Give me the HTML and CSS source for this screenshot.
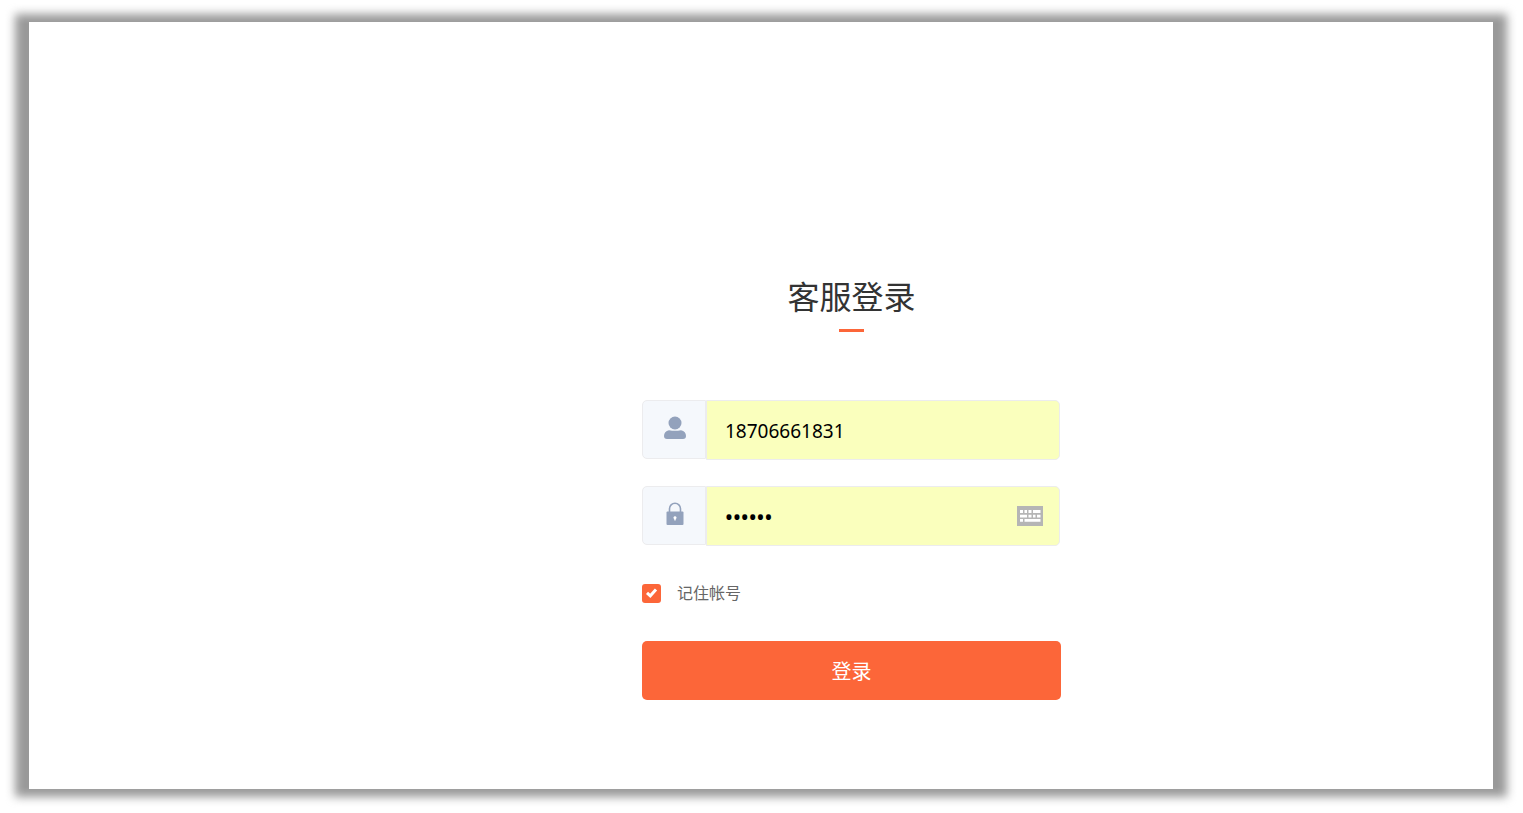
FILE: index.html
```html
<!DOCTYPE html>
<html lang="zh-CN">
<head>
<meta charset="utf-8">
<title>客服登录</title>
<link rel="stylesheet" href="styles.css">
</head>
<body>
<main class="panel">
  <form class="login">
    <h1 class="login-title">客服登录</h1>
    <div class="field">
      <label class="field-icon" for="account" aria-label="帐号">
        <svg width="22" height="24" viewBox="0 0 22 24" fill="#93a2bc"><circle cx="11" cy="7" r="6.5"/><path d="M5 14.2Q11 15.4 17 14.2Q22 15.500 22 20Q22 23 19 23H3Q0 23 0 20Q0 15.500 5 14.200Z"/></svg>
      </label>
      <input class="field-input" id="account" type="text" value="18706661831">
    </div>
    <div class="field">
      <label class="field-icon" for="password" aria-label="密码">
        <svg width="22" height="24" viewBox="0 0 22 24"><path d="M5.500 11V6.800a5.500 5.500 0 0 1 11 0V11" fill="none" stroke="#93a2bc" stroke-width="1.600"/><rect x="2.500" y="9.500" width="17" height="13.500" rx="1" fill="#93a2bc"/><path d="M11 14.200a1.500 1.500 0 0 1 .8 2.800L11.600 18.500H10.400L10.200 17a1.500 1.500 0 0 1 .8-2.800Z" fill="#fff"/></svg>
      </label>
      <input class="field-input field-input-secret" id="password" type="password" value="123456">
      <button class="keyboard" type="button" aria-label="软键盘">
        <svg width="26" height="20" viewBox="0 0 26 20"><path d="M0 0H26V20H0Z" fill="#b5b5b5"/><path d="M3 4h3v3H3zM7.500 4h2.500v3h-2.500zM11.500 4h3v3h-3zM16 4h7.500v3H16zM3 8.800h7v2.700H3zM11.500 8.800h3v2.700h-3zM16 8.800h2.500v2.700H16zM20 8.800h3.500v2.700H20zM3 13h3v2.700H3zM7.500 13h16v2.700h-16z" fill="#fff"/></svg>
      </button>
    </div>
    <label class="remember">
      <input class="remember-box" type="checkbox" checked>
      <svg class="remember-tick" width="19" height="19" viewBox="0 0 19 19" fill="none" stroke="#fff" stroke-width="3"><path d="M5 8.800L8.300 11.800L14 5.500"/></svg>
      <span>记住帐号</span>
    </label>
    <button class="submit" type="submit">登录</button>
  </form>
</main>
</body>
</html>
```
FILE: styles.css
```css
* {
  box-sizing: border-box;
}

body {
  margin: 0;
  min-height: 100vh;
  padding: 22px 30px 24px 29px;
  display: flex;
  background: #fff;
  font-family: "Noto Sans", "Noto Sans CJK SC", sans-serif;
  overflow: hidden;
}

.panel {
  position: relative;
  flex: 1;
  display: flex;
  justify-content: center;
  align-items: flex-end;
  padding: 40px 0 89px 181px;
  background: #fff;
}

/* soft frame, wider at the sides than above and below */
.panel::before {
  content: "";
  position: absolute;
  inset: -8px -14px;
  z-index: -1;
  background: #999;
  filter: blur(5px);
}

.login {
  width: 419px;
  display: flex;
  flex-direction: column;
}

.login-title {
  display: flex;
  flex-direction: column;
  align-items: center;
  gap: 8px;
  margin: 0 0 68px;
  font-size: 32px;
  line-height: 48px;
  font-weight: 400;
  color: #333;
}

.login-title::after {
  content: "";
  width: 25px;
  height: 3px;
  background: #fc6639;
}

.field {
  position: relative;
  display: flex;
  align-items: flex-start;
  margin: 0 1px 26px 0;
}

.field-icon {
  width: 64px;
  height: 59px;
  padding: 15px 0 0 21px;
  border: 1px solid #ececee;
  border-radius: 5px 0 0 5px;
  background: #f5f8fc;
}

.field-icon svg,
.keyboard svg {
  display: block;
}

.field-input {
  flex: 1;
  min-width: 0;
  height: 60px;
  padding: 2px 18px 0;
  border: 1px solid #ececee;
  border-radius: 0 5px 5px 0;
  outline: 0;
  background: #faffbd;
  color: #000;
  font-family: inherit;
  font-size: 19px;
}

.field-input-secret {
  font-size: 21px;
  font-weight: 500;
}

.keyboard {
  position: absolute;
  top: 20px;
  right: 17px;
  padding: 0;
  border: 0;
  background: none;
}

.remember {
  position: relative;
  display: flex;
  align-items: center;
  gap: 16px;
  margin: 10px 0 36px;
  font-size: 16px;
  line-height: 23px;
  font-weight: 400;
  color: #666;
}

.remember-box {
  appearance: none;
  width: 19px;
  height: 19px;
  margin: 0;
  border-radius: 3px;
  background: #fc6639;
}

.remember-tick {
  position: absolute;
  left: 0;
  top: 2px;
}

.submit {
  height: 59px;
  padding: 0;
  border: 0;
  border-radius: 5px;
  background: #fc6639;
  color: #fff;
  font-family: inherit;
  font-size: 20px;
}
```
